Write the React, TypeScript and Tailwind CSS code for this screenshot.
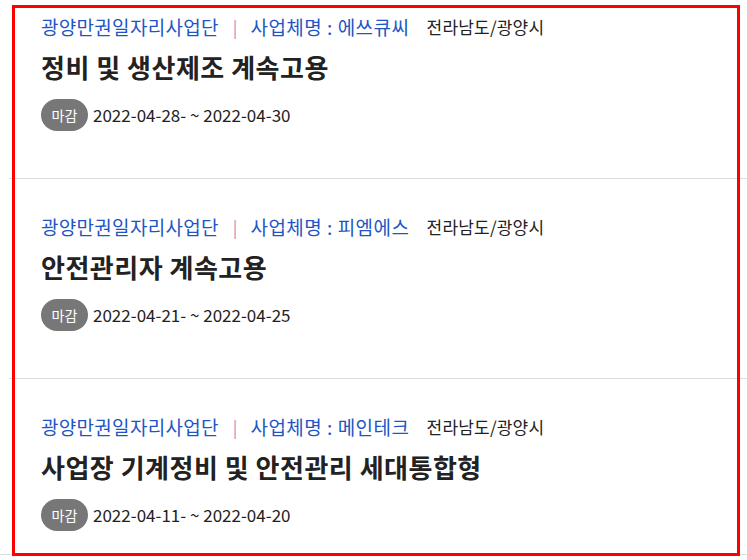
import React from "react";

const items = [
  { company: "에쓰큐씨", title: "정비 및 생산제조 계속고용", date: "2022-04-28- ~ 2022-04-30" },
  { company: "피엠에스", title: "안전관리자 계속고용", date: "2022-04-21- ~ 2022-04-25" },
  { company: "메인테크", title: "사업장 기계정비 및 안전관리 세대통합형", date: "2022-04-11- ~ 2022-04-20" },
];

export default function App() {
  return (
    <div
      className="relative w-[747px] h-[560px] bg-white overflow-hidden"
      style={{ fontFamily: '"Noto Sans CJK KR", "Noto Sans", sans-serif' }}
    >
      <div className="h-[555px] border-b border-[#dddddd] overflow-hidden">
        <ul className="ml-[9px] -mt-[21px]">
          {items.map((it, i) => (
            <li key={i} className="h-[200px] border-b border-[#dddddd] pl-[32px] pt-[36px]">
              <div className="flex items-center h-[24px] leading-[24px] whitespace-nowrap">
                <span className="text-[19px] tracking-[0.3px] text-[#1d55c4]">광양만권일자리사업단</span>
                <span className="text-[17px] text-[#b68db5] ml-[14px] mr-[13px]">|</span>
                <span className="text-[19px] tracking-[0.5px] text-[#1d55c4]">사업체명 : {it.company}</span>
                <span className="text-[17px] tracking-[0.2px] text-[#222222] ml-[17px]">전라남도/광양시</span>
              </div>
              <div className="mt-[11px] h-[34px] leading-[34px] text-[26px] tracking-[0.5px] font-bold text-[#222222] whitespace-nowrap">
                {it.title}
              </div>
              <div className="mt-[15px] flex items-center">
                <span className="inline-flex items-center justify-center w-[47px] h-[32px] rounded-full bg-[#777777] text-white text-[14px]">
                  마감
                </span>
                <span className="ml-[5px] text-[17px] text-[#222222]">{it.date}</span>
              </div>
            </li>
          ))}
        </ul>
      </div>
      <div className="pointer-events-none absolute left-[12px] top-[5px] w-[728px] h-[551px] border-[3px] border-[#ff0000]" />
    </div>
  );
}
